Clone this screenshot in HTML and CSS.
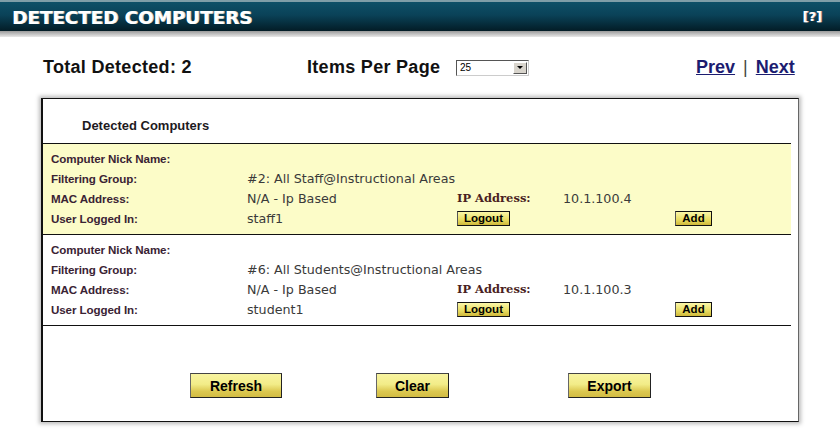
FILE: index.html
```html
<!DOCTYPE html>
<html>
<head>
<meta charset="utf-8">
<link rel="stylesheet" href="styles.css">
</head>
<body>
<div class="titlebar">
  <h1 class="title">DETECTED COMPUTERS</h1>
  <span class="help">[?]</span>
</div>
<div class="titleshadow"></div>

<div class="toolbar">
  <div class="total">Total Detected: 2</div>
  <div class="perpage">
    <span class="perpage-label">Items Per Page</span>
    <div class="fakeselect">
      <span class="fakeselect-value">25</span>
      <span class="fakeselect-btn"><span class="arrow"></span></span>
    </div>
  </div>
  <div class="pager"><a href="#" class="plink">Prev</a> <span class="sep">|</span> <a href="#" class="plink">Next</a></div>
</div>

<div class="panel">
  <div class="panel-head">Detected Computers</div>
  <div class="rows">
    <div class="rec rec-hi">
      <div class="lbl">Computer Nick Name:</div><div class="val span4"></div>
      <div class="lbl">Filtering Group:</div><div class="val span4">#2: All Staff@Instructional Areas</div>
      <div class="lbl">MAC Address:</div><div class="val">N/A - Ip Based</div><div class="lbl2">IP Address:</div><div class="val span2">10.1.100.4</div>
      <div class="lbl">User Logged In:</div><div class="val">staff1</div><div class="cell"><button class="sbtn w-logout">Logout</button></div><div class="cell"></div><div class="cell"><button class="sbtn w-add">Add</button></div>
    </div>
    <div class="rec">
      <div class="lbl">Computer Nick Name:</div><div class="val span4"></div>
      <div class="lbl">Filtering Group:</div><div class="val span4">#6: All Students@Instructional Areas</div>
      <div class="lbl">MAC Address:</div><div class="val">N/A - Ip Based</div><div class="lbl2">IP Address:</div><div class="val span2">10.1.100.3</div>
      <div class="lbl">User Logged In:</div><div class="val">student1</div><div class="cell"><button class="sbtn w-logout">Logout</button></div><div class="cell"></div><div class="cell"><button class="sbtn w-add">Add</button></div>
    </div>
  </div>
  <div class="actions">
    <button class="bbtn b-refresh">Refresh</button>
    <button class="bbtn b-clear">Clear</button>
    <button class="bbtn b-export">Export</button>
  </div>
</div>
</body>
</html>
```

FILE: styles.css
```css
html, body {
  margin: 0;
  padding: 0;
  background: #ffffff;
  width: 840px;
  height: 429px;
  overflow: hidden;
  font-family: "Liberation Sans", Arial, sans-serif;
}

.titlebar {
  height: 29px;
  border-top: 2px solid #7f9ea8;
  background: linear-gradient(#0e5068 0%, #0a4258 45%, #052a38 80%, #031c26 100%);
  display: flex;
  align-items: center;
  justify-content: space-between;
  padding: 0 18px 0 12px;
  box-sizing: content-box;
}
.title {
  margin: 0;
  color: #ffffff;
  font-family: "DejaVu Sans", sans-serif;
  font-size: 18.3px;
  font-weight: bold;
  letter-spacing: 0;
  text-shadow: 1px 0 0 #d8d0c0;
  padding-top: 1px;
}
.help {
  color: #ffffff;
  font-family: "DejaVu Sans", sans-serif;
  font-weight: bold;
  font-size: 13px;
  text-shadow: 1px 0 0 #c8a0a0;
}
.titleshadow {
  height: 6px;
  background: linear-gradient(#9a9a9a, #e8e8e8);
}

.toolbar {
  display: grid;
  grid-template-columns: 264px 389px auto;
  align-items: center;
  padding: 15px 0 0 43px;
  height: 30px;
}
.total, .perpage-label {
  font-size: 18px;
  font-weight: bold;
  color: #111111;
  letter-spacing: 0.3px;
}
.perpage {
  display: flex;
  align-items: center;
}
.perpage-label {
  width: 149px;
}
.fakeselect {
  width: 71px;
  height: 14px;
  border: 1px solid #555;
  border-right-color: #ccc;
  border-bottom-color: #ccc;
  display: flex;
  align-items: center;
  background: #fff;
  margin-top: 1px;
}
.fakeselect-value {
  flex: 1;
  font-size: 10px;
  padding-left: 3px;
  color: #000;
}
.fakeselect-btn {
  width: 14px;
  height: 12px;
  margin-right: 1px;
  background: #d8d4cc;
  border: 1px solid #fff;
  border-right-color: #555;
  border-bottom-color: #555;
  box-sizing: border-box;
  display: flex;
  align-items: center;
  justify-content: center;
}
.arrow {
  width: 0;
  height: 0;
  border-left: 3px solid transparent;
  border-right: 3px solid transparent;
  border-top: 3px solid #000;
}
.pager {
  font-size: 18px;
  font-weight: bold;
  color: #333;
}
.plink {
  color: #1c1c70;
  text-decoration: underline;
}
.sep {
  font-weight: normal;
  color: #444;
  padding: 0 3px;
}

.panel {
  margin: 16px 0 0 41px;
  width: 755px;
  height: 322px;
  border: 1px solid #111;
  border-left-width: 2px;
  border-right-color: #666;
  box-shadow: 0 0 4px 2px #bdbdbd;
  background: #fff;
}
.panel-head {
  height: 44px;
  box-sizing: border-box;
  padding: 19px 0 0 39px;
  font-size: 13px;
  font-weight: bold;
  color: #1e1a1e;
}
.rows {
  margin-right: 7px;
  border-top: 1px solid #111;
}
.rec {
  display: grid;
  grid-template-columns: 196px 210px 106px 112px auto;
  grid-auto-rows: 20px;
  align-items: center;
  padding: 4px 0 6px 8px;
  border-bottom: 1px solid #111;
  font-family: "DejaVu Sans", sans-serif;
  font-size: 12.7px;
}
.rec-hi {
  background: #fcfcc8;
}
.lbl {
  font-family: "Liberation Sans", Arial, sans-serif;
  font-weight: bold;
  font-size: 11.6px;
  letter-spacing: -0.1px;
  color: #3a2334;
}
.lbl2 {
  font-family: "DejaVu Serif", serif;
  font-weight: bold;
  font-size: 11.5px;
  color: #4a1e22;
}
.val {
  color: #3a3a3a;
}
.span4 { grid-column: span 4; }
.span2 { grid-column: span 2; }
.cell { height: 20px; display: flex; align-items: center; }

.sbtn {
  height: 15px;
  padding: 0;
  border: 1px solid #111;
  border-left-color: #555;
  background: linear-gradient(#fbf7a8, #e8dc60 60%, #cfb83a);
  font-family: "Liberation Sans", Arial, sans-serif;
  font-weight: bold;
  font-size: 11.5px;
  color: #000;
  line-height: 12px;
}
.w-logout { width: 53px; }
.w-add { width: 37px; }

.actions {
  display: flex;
  align-items: center;
  padding: 47px 0 0 147px;
}
.bbtn {
  height: 25px;
  padding: 0;
  border: 1px solid #222;
  border-left-color: #666;
  border-top-color: #444;
  background: linear-gradient(#f8f4a0, #f2ec88 45%, #dcc850 75%, #d2bc44);
  font-family: "Liberation Sans", Arial, sans-serif;
  font-weight: bold;
  font-size: 14px;
  color: #000;
}
.b-refresh { width: 92px; }
.b-clear { width: 73px; margin-left: 94px; }
.b-export { width: 83px; margin-left: 119px; }
```
